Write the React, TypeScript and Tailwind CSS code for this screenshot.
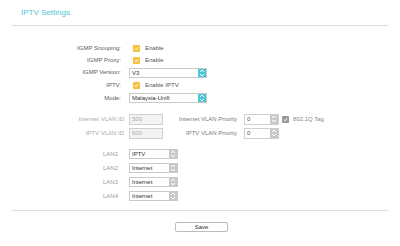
import React from 'react';

const Spin = ({ tone }: { tone: 'cyan' | 'gray' }) => (
  <div
    className={`flex h-full w-[8px] items-center justify-center ${
      tone === 'cyan' ? 'bg-[#4cc6d6]' : 'bg-[#c8c8c8]'
    }`}
  >
    <svg width="6" height="8" viewBox="0 0 6 8" fill="none" stroke="#fff" strokeWidth="1">
      <path d="M1 3 L3 1 L5 3" />
      <path d="M1 5 L3 7 L5 5" />
    </svg>
  </div>
);

const Check = ({ tone = 'yellow' }: { tone?: 'yellow' | 'gray' }) => (
  <div
    className={`flex h-[7px] w-[7px] items-center justify-center rounded-[1px] ${
      tone === 'yellow' ? 'bg-[#f6c23e]' : 'bg-[#9a9a9a]'
    }`}
  >
    <svg width="5" height="5" viewBox="0 0 5 5" fill="none" stroke="#fff" strokeWidth="1">
      <path d="M0.8 2.6 L2 3.8 L4.2 1.2" />
    </svg>
  </div>
);

function Select({ value, width, tone }: { value: string; width: string; tone: 'cyan' | 'gray' }) {
  return (
    <div className={`flex h-[10px] ${width} border border-[#c9c9c9] bg-white`}>
      <span className="flex-1 pl-[2px] text-[6px] leading-[8px] text-[#333]">{value}</span>
      <Spin tone={tone} />
    </div>
  );
}

const Row = ({ label, labelW, h, children }: { label: string; labelW: string; h: string; children: React.ReactNode }) => (
  <div className={`flex items-center ${h}`}>
    <span className={`${labelW} text-right text-[6px] text-[#5a5a5a]`}>{label}</span>
    <div className="ml-[8px] flex items-center">{children}</div>
  </div>
);

export default function App() {
  const lans = [
    { name: 'LAN1', value: 'IPTV' },
    { name: 'LAN2', value: 'Internet' },
    { name: 'LAN3', value: 'Internet' },
    { name: 'LAN4', value: 'Internet' },
  ];

  return (
    <div className="h-[246px] w-[400px] overflow-hidden bg-white font-['Liberation_Sans',Arial,sans-serif]">
      <div className="pl-[21px] pt-[8px] text-[8px] leading-[9px] text-[#4cc6d6]">IPTV Settings</div>
      <div className="mx-[12px] mt-[8px] h-px bg-[#dcdcdc]" />

      <div className="mt-[16px]">
        <Row label="IGMP Snooping:" labelW="w-[121px]" h="h-[12px]">
          <div className="ml-[4px]"><Check /></div>
          <span className="ml-[5px] text-[6px] text-[#555]">Enable</span>
        </Row>
        <Row label="IGMP Proxy:" labelW="w-[121px]" h="h-[12px]">
          <div className="ml-[4px]"><Check /></div>
          <span className="ml-[5px] text-[6px] text-[#555]">Enable</span>
        </Row>
        <Row label="IGMP Version:" labelW="w-[121px]" h="h-[13px]">
          <Select value="V3" width="w-[78px]" tone="cyan" />
        </Row>
        <Row label="IPTV:" labelW="w-[121px]" h="h-[13px]">
          <div className="ml-[4px]"><Check /></div>
          <span className="ml-[5px] text-[6px] text-[#555]">Enable IPTV</span>
        </Row>
        <Row label="Mode:" labelW="w-[121px]" h="h-[12px]">
          <Select value="Malaysia-Unifi" width="w-[78px]" tone="cyan" />
        </Row>
      </div>

      <div className="mt-[8px]">
        {[
          { id: 'Internet VLAN ID', v: '500', p: 'Internet VLAN Priority', tag: true },
          { id: 'IPTV VLAN ID', v: '600', p: 'IPTV VLAN Priority', tag: false },
        ].map((r) => (
          <div key={r.id} className="flex h-[14px] items-center">
            <span className="w-[124px] text-right text-[6px] text-[#aaa]">{r.id}</span>
            <div className="ml-[5px] h-[11px] w-[34px] border border-[#cfcfcf] bg-[#f3f3f3] pl-[2px] text-[6px] leading-[9px] text-[#aaa]">
              {r.v}
            </div>
            <span className="w-[74px] text-right text-[6px] text-[#777]">{r.p}</span>
            <div className="ml-[7px] flex h-[11px] w-[35px] border border-[#cfcfcf] bg-white">
              <span className="flex-1 pl-[2px] text-[6px] leading-[9px] text-[#555]">0</span>
              <Spin tone="gray" />
            </div>
            {r.tag && (
              <div className="ml-[3px] flex items-center">
                <Check tone="gray" />
                <span className="ml-[4px] text-[6px] text-[#888]">802.1Q Tag</span>
              </div>
            )}
          </div>
        ))}
      </div>

      <div className="mt-[7px]">
        {lans.map((l) => (
          <div key={l.name} className="flex h-[14px] items-center">
            <span className="w-[118px] text-right text-[6px] text-[#999]">{l.name}</span>
            <div className="ml-[11px]">
              <Select value={l.value} width="w-[49px]" tone="gray" />
            </div>
          </div>
        ))}
      </div>

      <div className="mx-[12px] mt-[7px] h-px bg-[#dcdcdc]" />

      <div className="ml-[175px] mt-[11px] flex h-[10px] w-[53px] items-center justify-center rounded-[2px] border border-[#bdbdbd] bg-white text-[6px] text-[#333]">
        Save
      </div>
    </div>
  );
}
